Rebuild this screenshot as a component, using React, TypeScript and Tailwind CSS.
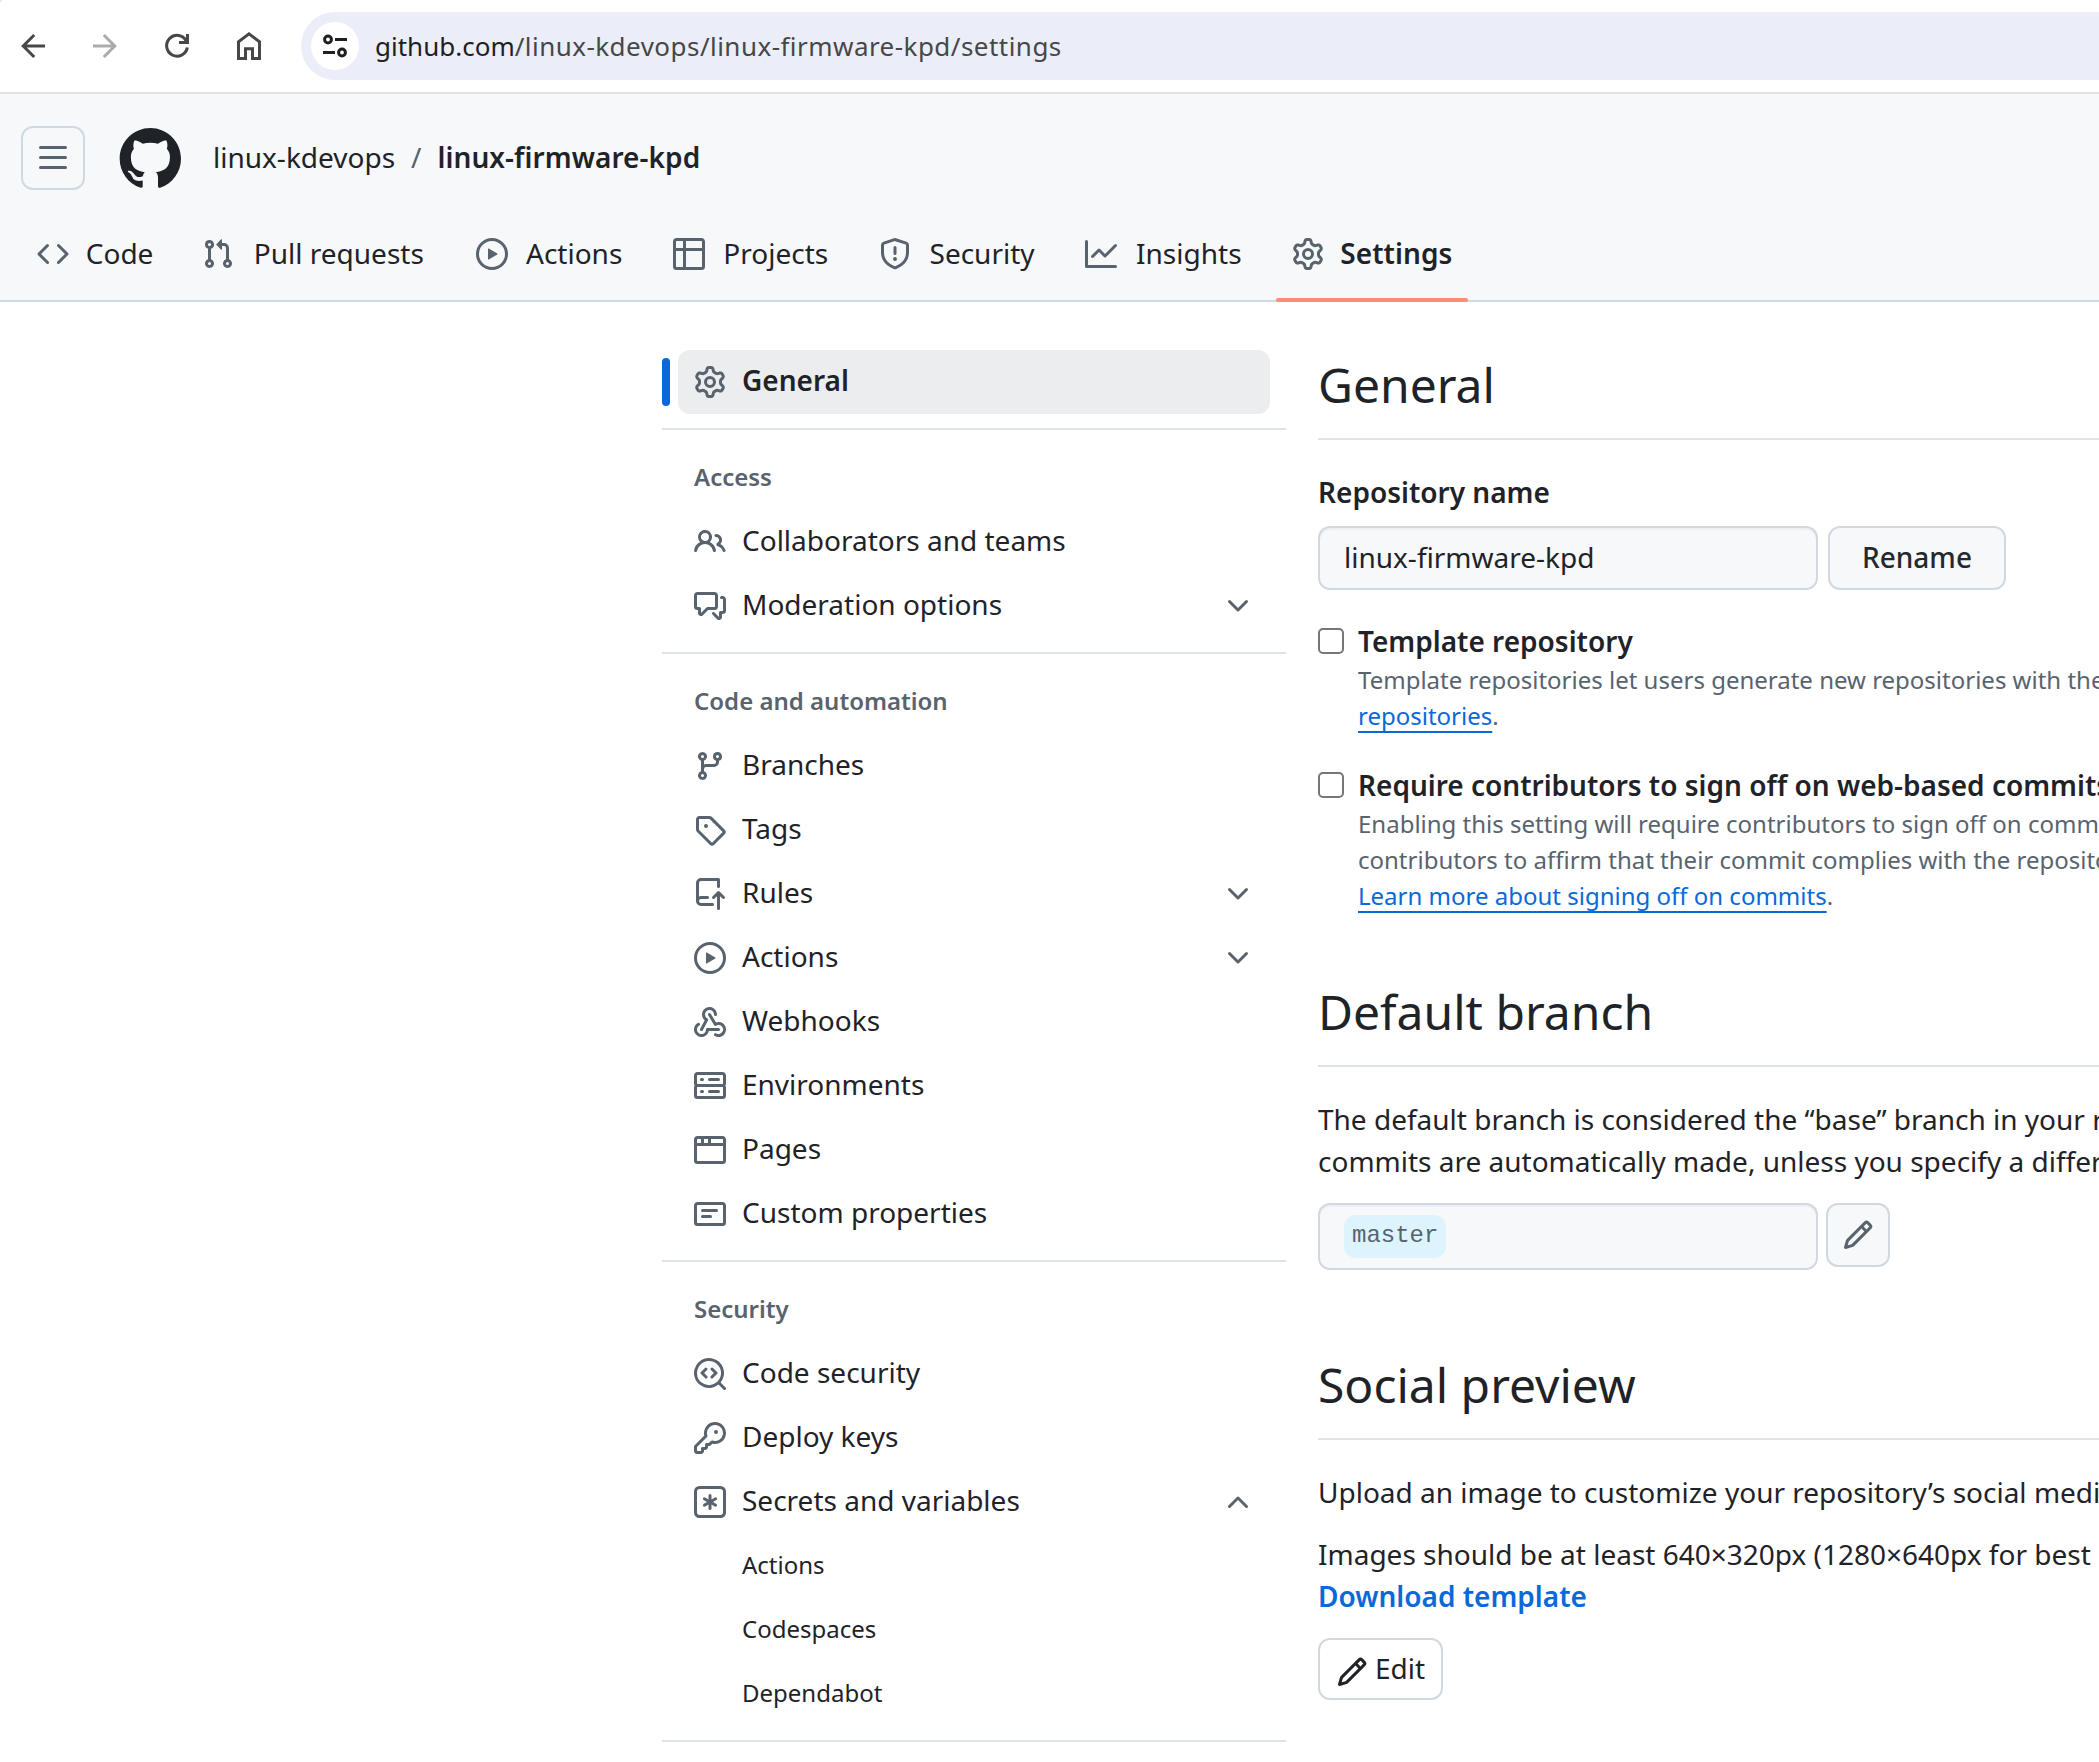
import type { ReactNode } from 'react';

const paths = {
  bars: 'M1 2.75A.75.75 0 0 1 1.75 2h12.5a.75.75 0 0 1 0 1.5H1.75A.75.75 0 0 1 1 2.75Zm0 5A.75.75 0 0 1 1.75 7h12.5a.75.75 0 0 1 0 1.5H1.75A.75.75 0 0 1 1 7.75ZM1.75 12h12.5a.75.75 0 0 1 0 1.5H1.75a.75.75 0 0 1 0-1.5Z',
  code: 'm11.28 3.22 4.25 4.25a.75.75 0 0 1 0 1.06l-4.25 4.25a.749.749 0 0 1-1.275-.326.749.749 0 0 1 .215-.734L13.94 8l-3.72-3.72a.749.749 0 0 1 .326-1.275.749.749 0 0 1 .734.215Zm-6.56 0a.751.751 0 0 1 1.042.018.751.751 0 0 1 .018 1.042L2.06 8l3.72 3.72a.749.749 0 0 1-.326 1.275.749.749 0 0 1-.734-.215L.47 8.53a.75.75 0 0 1 0-1.06Z',
  pull: 'M1.5 3.25a2.25 2.25 0 1 1 3 2.122v5.256a2.251 2.251 0 1 1-1.5 0V5.372A2.25 2.25 0 0 1 1.5 3.25Zm5.677-.177L9.573.677A.25.25 0 0 1 10 .854V2.5h1A2.5 2.5 0 0 1 13.5 5v5.628a2.251 2.251 0 1 1-1.5 0V5a1 1 0 0 0-1-1h-1v1.646a.25.25 0 0 1-.427.177L7.177 3.427a.25.25 0 0 1 0-.354ZM3.75 2.5a.75.75 0 1 0 0 1.5.75.75 0 0 0 0-1.5Zm0 9.5a.75.75 0 1 0 0 1.5.75.75 0 0 0 0-1.5Zm8.25.75a.75.75 0 1 0 1.5 0 .75.75 0 0 0-1.5 0Z',
  play: 'M8 0a8 8 0 1 1 0 16A8 8 0 0 1 8 0ZM1.5 8a6.5 6.5 0 1 0 13 0 6.5 6.5 0 0 0-13 0Zm4.879-2.773 4.264 2.559a.25.25 0 0 1 0 .428l-4.264 2.559A.25.25 0 0 1 6 10.559V5.442a.25.25 0 0 1 .379-.215Z',
  table: 'M0 1.75C0 .784.784 0 1.75 0h12.5C15.216 0 16 .784 16 1.75v12.5A1.75 1.75 0 0 1 14.25 16H1.75A1.75 1.75 0 0 1 0 14.25ZM6.5 6.5v8h7.75a.25.25 0 0 0 .25-.25V6.5Zm8-1.5V1.75a.25.25 0 0 0-.25-.25H6.5V5Zm-13 1.5v7.75c0 .138.112.25.25.25H5v-8ZM5 5V1.5H1.75a.25.25 0 0 0-.25.25V5Z',
  shield: 'M7.467.133a1.748 1.748 0 0 1 1.066 0l5.25 1.68A1.75 1.75 0 0 1 15 3.48V7c0 1.566-.32 3.182-1.303 4.682-.983 1.498-2.585 2.813-5.032 3.855a1.697 1.697 0 0 1-1.33 0c-2.447-1.042-4.049-2.357-5.032-3.855C1.32 10.182 1 8.566 1 7V3.48a1.75 1.75 0 0 1 1.217-1.667Zm.61 1.429a.25.25 0 0 0-.153 0l-5.25 1.68a.25.25 0 0 0-.174.238V7c0 1.358.275 2.666 1.057 3.86.784 1.194 2.121 2.34 4.366 3.297a.196.196 0 0 0 .154 0c2.245-.956 3.582-2.104 4.366-3.298C13.225 9.666 13.5 8.36 13.5 7V3.48a.251.251 0 0 0-.174-.237l-5.25-1.68ZM8.75 4.75v3a.75.75 0 0 1-1.5 0v-3a.75.75 0 0 1 1.5 0ZM9 10.5a1 1 0 1 1-2 0 1 1 0 0 1 2 0Z',
  graph: 'M1.5 1.75V13.5h13.75a.75.75 0 0 1 0 1.5H.75a.75.75 0 0 1-.75-.75V1.75a.75.75 0 0 1 1.5 0Zm14.28 2.53-5.25 5.25a.75.75 0 0 1-1.06 0L7 7.06 4.28 9.78a.751.751 0 0 1-1.042-.018.751.751 0 0 1-.018-1.042l3.25-3.25a.75.75 0 0 1 1.06 0L10 7.94l4.72-4.72a.751.751 0 0 1 1.042.018.751.751 0 0 1 .018 1.042Z',
  gear: 'M8 0a8.2 8.2 0 0 1 .701.031C9.444.095 9.99.645 10.16 1.29l.288 1.107c.018.066.079.158.212.224.231.114.454.243.668.386.123.082.233.09.299.071l1.103-.303c.644-.176 1.392.021 1.82.63.27.385.506.792.704 1.218.315.675.111 1.422-.364 1.891l-.814.806c-.049.048-.098.147-.088.294.016.257.016.515 0 .772-.01.147.038.246.088.294l.814.806c.475.469.679 1.216.364 1.891a7.977 7.977 0 0 1-.704 1.217c-.428.61-1.176.807-1.82.63l-1.102-.302c-.067-.019-.177-.011-.3.071a5.909 5.909 0 0 1-.668.386c-.133.066-.194.158-.211.224l-.29 1.106c-.168.646-.715 1.196-1.458 1.26a8.006 8.006 0 0 1-1.402 0c-.743-.064-1.289-.614-1.458-1.26l-.289-1.106c-.018-.066-.079-.158-.212-.224a5.738 5.738 0 0 1-.668-.386c-.123-.082-.233-.09-.299-.071l-1.103.303c-.644.176-1.392-.021-1.82-.63a8.12 8.12 0 0 1-.704-1.218c-.315-.675-.111-1.422.363-1.891l.815-.806c.05-.048.098-.147.088-.294a6.214 6.214 0 0 1 0-.772c.01-.147-.038-.246-.088-.294l-.815-.806C.635 6.045.431 5.298.746 4.623a7.92 7.92 0 0 1 .704-1.217c.428-.61 1.176-.807 1.82-.63l1.102.302c.067.019.177.011.3-.071.214-.143.437-.272.668-.386.133-.066.194-.158.211-.224l.29-1.106C6.009.645 6.556.095 7.299.03 7.53.01 7.764 0 8 0Zm-.571 1.525c-.036.003-.108.036-.137.146l-.289 1.105c-.147.561-.549.967-.998 1.189-.173.086-.34.183-.5.29-.417.278-.97.423-1.529.27l-1.103-.303c-.109-.03-.175.016-.195.045-.22.312-.412.644-.573.99-.014.031-.021.11.059.19l.815.806c.411.406.562.957.53 1.456a4.709 4.709 0 0 0 0 .582c.032.499-.119 1.05-.53 1.456l-.815.806c-.081.08-.073.159-.059.19.162.346.353.677.573.989.02.03.085.076.195.046l1.102-.303c.56-.153 1.113-.008 1.53.27.161.107.328.204.501.29.447.222.85.629.997 1.189l.289 1.105c.029.109.101.143.137.146a6.6 6.6 0 0 0 1.142 0c.036-.003.108-.036.137-.146l.289-1.105c.147-.561.549-.967.998-1.189.173-.086.34-.183.5-.29.417-.278.97-.423 1.529-.27l1.103.303c.109.029.175-.016.195-.045.22-.313.411-.644.573-.99.014-.031.021-.11-.059-.19l-.815-.806c-.411-.406-.562-.957-.53-1.456a4.709 4.709 0 0 0 0-.582c-.032-.499.119-1.05.53-1.456l.815-.806c.081-.08.073-.159.059-.19a6.464 6.464 0 0 0-.573-.989c-.02-.03-.085-.076-.195-.046l-1.102.303c-.56.153-1.113.008-1.53-.27a4.44 4.44 0 0 0-.501-.29c-.447-.222-.85-.629-.997-1.189l-.289-1.105c-.029-.11-.101-.143-.137-.146a6.6 6.6 0 0 0-1.142 0ZM11 8a3 3 0 1 1-6 0 3 3 0 0 1 6 0ZM9.5 8a1.5 1.5 0 1 0-3.001.001A1.5 1.5 0 0 0 9.5 8Z',
  people: 'M2 5.5a3.5 3.5 0 1 1 5.898 2.549 5.508 5.508 0 0 1 3.034 4.084.75.75 0 1 1-1.482.235 4 4 0 0 0-7.9 0 .75.75 0 0 1-1.482-.236A5.507 5.507 0 0 1 3.102 8.05 3.493 3.493 0 0 1 2 5.5ZM11 4a3.001 3.001 0 0 1 2.22 5.018 5.01 5.01 0 0 1 2.56 3.012.749.749 0 0 1-.885.954.752.752 0 0 1-.549-.514 3.507 3.507 0 0 0-2.522-2.372.75.75 0 0 1-.574-.73v-.352a.75.75 0 0 1 .416-.672A1.5 1.5 0 0 0 11 5.5.75.75 0 0 1 11 4Zm-5.5-.5a2 2 0 1 0-.001 3.999A2 2 0 0 0 5.5 3.5Z',
  discussion: 'M1.75 1h8.5c.966 0 1.75.784 1.75 1.75v5.5A1.75 1.75 0 0 1 10.25 10H7.061l-2.574 2.573A1.458 1.458 0 0 1 2 11.543V10h-.25A1.75 1.75 0 0 1 0 8.25v-5.5C0 1.784.784 1 1.75 1ZM1.5 2.75v5.5c0 .138.112.25.25.25h1a.75.75 0 0 1 .75.75v2.19l2.72-2.72a.749.749 0 0 1 .53-.22h3.5a.25.25 0 0 0 .25-.25v-5.5a.25.25 0 0 0-.25-.25h-8.5a.25.25 0 0 0-.25.25Zm13 2a.25.25 0 0 0-.25-.25h-.5a.75.75 0 0 1 0-1.5h.5c.966 0 1.75.784 1.75 1.75v5.5A1.75 1.75 0 0 1 14.25 12H14v1.543a1.458 1.458 0 0 1-2.487 1.03L9.22 12.28a.749.749 0 0 1 .326-1.275.749.749 0 0 1 .734.215l2.22 2.22v-2.19a.75.75 0 0 1 .75-.75h1a.25.25 0 0 0 .25-.25Z',
  branch: 'M9.5 3.25a2.25 2.25 0 1 1 3 2.122V6A2.5 2.5 0 0 1 10 8.5H6a1 1 0 0 0-1 1v1.128a2.251 2.251 0 1 1-1.5 0V5.372a2.25 2.25 0 1 1 1.5 0v1.836A2.493 2.493 0 0 1 6 7h4a1 1 0 0 0 1-1v-.628A2.25 2.25 0 0 1 9.5 3.25Zm-6 0a.75.75 0 1 0 1.5 0 .75.75 0 0 0-1.5 0Zm8.25-.75a.75.75 0 1 0 0 1.5.75.75 0 0 0 0-1.5ZM4.25 12a.75.75 0 1 0 0 1.5.75.75 0 0 0 0-1.5Z',
  tag: 'M1 7.775V2.75C1 1.784 1.784 1 2.75 1h5.025c.464 0 .91.184 1.238.513l6.25 6.25a1.75 1.75 0 0 1 0 2.474l-5.026 5.026a1.75 1.75 0 0 1-2.474 0l-6.25-6.25A1.752 1.752 0 0 1 1 7.775Zm1.5 0c0 .066.026.13.073.177l6.25 6.25a.25.25 0 0 0 .354 0l5.025-5.025a.25.25 0 0 0 0-.354l-6.25-6.25a.25.25 0 0 0-.177-.073H2.75a.25.25 0 0 0-.25.25ZM6 5a1 1 0 1 1 0 2 1 1 0 0 1 0-2Z',
  repoPush: 'M1 2.5A2.5 2.5 0 0 1 3.5 0h8.75a.75.75 0 0 1 .75.75v3.5a.75.75 0 0 1-1.5 0V1.5h-8a1 1 0 0 0-1 1v6.708A2.493 2.493 0 0 1 3.5 9h3.25a.75.75 0 0 1 0 1.5H3.5a1 1 0 0 0 0 2h5.75a.75.75 0 0 1 0 1.5H3.5A2.5 2.5 0 0 1 1 11.5Zm13.23 7.79a.75.75 0 0 0 1.06-1.06l-2.505-2.505a.75.75 0 0 0-1.06 0L9.22 9.229a.75.75 0 0 0 1.06 1.061l1.225-1.224v6.184a.75.75 0 0 0 1.5 0V9.066Z',
  webhook: 'M5.5 4.25a2.25 2.25 0 0 1 4.5 0 .75.75 0 0 0 1.5 0 3.75 3.75 0 1 0-6.14 2.889l-2.272 4.258a.75.75 0 0 0 1.324.706L7 7.25a.75.75 0 0 0-.309-1.015A2.25 2.25 0 0 1 5.5 4.25ZM7.364 3.607a.75.75 0 0 1 1.03.257l2.608 4.349a3.75 3.75 0 1 1-.628 6.785.75.75 0 0 1 .752-1.299 2.25 2.25 0 1 0-.033-3.88.75.75 0 0 1-1.03-.256L7.107 4.636a.75.75 0 0 1 .257-1.03ZM2.9 8.776A.75.75 0 0 1 2.625 9.8 2.25 2.25 0 1 0 6 11.75a.75.75 0 0 1 .75-.751h5.5a.75.75 0 0 1 0 1.5H7.425a3.751 3.751 0 1 1-5.55-3.998.75.75 0 0 1 1.024.274Z',
  server: 'M1.75 1h12.5c.966 0 1.75.784 1.75 1.75v4c0 .372-.116.717-.314 1 .198.283.314.628.314 1v4a1.75 1.75 0 0 1-1.75 1.75H1.75A1.75 1.75 0 0 1 0 12.75v-4c0-.358.109-.707.314-1a1.739 1.739 0 0 1-.314-1v-4C0 1.784.784 1 1.75 1ZM1.5 2.75v4c0 .138.112.25.25.25h12.5a.25.25 0 0 0 .25-.25v-4a.25.25 0 0 0-.25-.25H1.75a.25.25 0 0 0-.25.25Zm.25 5.75a.25.25 0 0 0-.25.25v4c0 .138.112.25.25.25h12.5a.25.25 0 0 0 .25-.25v-4a.25.25 0 0 0-.25-.25ZM7 4.75A.75.75 0 0 1 7.75 4h4.5a.75.75 0 0 1 0 1.5h-4.5A.75.75 0 0 1 7 4.75ZM7.75 10h4.5a.75.75 0 0 1 0 1.5h-4.5a.75.75 0 0 1 0-1.5ZM3 4.75A.75.75 0 0 1 3.75 4h.5a.75.75 0 0 1 0 1.5h-.5A.75.75 0 0 1 3 4.75ZM3.75 10h.5a.75.75 0 0 1 0 1.5h-.5a.75.75 0 0 1 0-1.5Z',
  browser: 'M0 2.75C0 1.784.784 1 1.75 1h12.5c.966 0 1.75.784 1.75 1.75v10.5A1.75 1.75 0 0 1 14.25 15H1.75A1.75 1.75 0 0 1 0 13.25ZM14.5 6h-13v7.25c0 .138.112.25.25.25h12.5a.25.25 0 0 0 .25-.25Zm-6-3.5v2h6V2.75a.25.25 0 0 0-.25-.25ZM5 2.5v2h2v-2Zm-3.25 0a.25.25 0 0 0-.25.25V4.5h2v-2Z',
  note: 'M0 3.75C0 2.784.784 2 1.75 2h12.5c.966 0 1.75.784 1.75 1.75v8.5A1.75 1.75 0 0 1 14.25 14H1.75A1.75 1.75 0 0 1 0 12.25Zm1.75-.25a.25.25 0 0 0-.25.25v8.5c0 .138.112.25.25.25h12.5a.25.25 0 0 0 .25-.25v-8.5a.25.25 0 0 0-.25-.25ZM3.5 6.25a.75.75 0 0 1 .75-.75h7a.75.75 0 0 1 0 1.5h-7a.75.75 0 0 1-.75-.75Zm.75 2.25h4a.75.75 0 0 1 0 1.5h-4a.75.75 0 0 1 0-1.5Z',
  codescan: 'M8.47 4.97a.75.75 0 0 0 0 1.06L9.94 7.5 8.47 8.97a.75.75 0 1 0 1.06 1.06l2-2a.75.75 0 0 0 0-1.06l-2-2a.75.75 0 0 0-1.06 0ZM6.53 6.03a.75.75 0 0 0-1.06-1.06l-2 2a.75.75 0 0 0 0 1.06l2 2a.75.75 0 1 0 1.06-1.06L5.06 7.5l1.47-1.47ZM12.246 13.307a7.501 7.501 0 1 1 1.06-1.06l2.474 2.473a.749.749 0 0 1-.326 1.275.749.749 0 0 1-.734-.215ZM1.5 7.5a6.002 6.002 0 0 0 3.608 5.504 6.002 6.002 0 0 0 6.486-1.117.748.748 0 0 1 .292-.293A6 6 0 1 0 1.5 7.5Z',
  key: 'M10.5 0a5.499 5.499 0 1 1-1.288 10.848l-.932.932a.749.749 0 0 1-.53.22H7v.75a.749.749 0 0 1-.22.53l-.5.5a.749.749 0 0 1-.53.22H5v.75a.749.749 0 0 1-.22.53l-.5.5a.749.749 0 0 1-.53.22h-2A1.75 1.75 0 0 1 0 14.25v-2c0-.199.079-.389.22-.53l4.932-4.932A5.5 5.5 0 0 1 10.5 0Zm-4 5.5c-.001.431.069.86.205 1.269a.75.75 0 0 1-.181.768L1.5 12.56v1.69c0 .138.112.25.25.25h1.69l.06-.06v-1.19a.75.75 0 0 1 .75-.75h1.19l.06-.06v-1.19a.75.75 0 0 1 .75-.75h1.19l1.023-1.025a.75.75 0 0 1 .768-.18A4 4 0 1 0 6.5 5.5ZM11 6a1 1 0 1 1 0-2 1 1 0 0 1 0 2Z',
  asterisk: 'M0 2.75A2.75 2.75 0 0 1 2.75 0h10.5A2.75 2.75 0 0 1 16 2.75v10.5A2.75 2.75 0 0 1 13.25 16H2.75A2.75 2.75 0 0 1 0 13.25ZM2.75 1.5c-.69 0-1.25.56-1.25 1.25v10.5c0 .69.56 1.25 1.25 1.25h10.5c.69 0 1.25-.56 1.25-1.25V2.75c0-.69-.56-1.25-1.25-1.25ZM8 4a.75.75 0 0 1 .75.75V6.7l1.69-.975a.75.75 0 0 1 .75 1.3L9.5 8l1.69.976a.75.75 0 0 1-.75 1.298L8.75 9.3v1.951a.75.75 0 0 1-1.5 0V9.299l-1.69.976a.75.75 0 0 1-.75-1.3L6.5 8l-1.69-.975a.75.75 0 0 1 .75-1.3l1.69.976V4.75A.75.75 0 0 1 8 4Z',
  chevron: 'M12.78 5.22a.749.749 0 0 1 0 1.06l-4.25 4.25a.749.749 0 0 1-1.06 0L3.22 6.28a.749.749 0 1 1 1.06-1.06L8 8.939l3.72-3.719a.749.749 0 0 1 1.06 0Z',
  pencil: 'M11.013 1.427a1.75 1.75 0 0 1 2.474 0l1.086 1.086a1.75 1.75 0 0 1 0 2.474l-8.61 8.61c-.21.21-.47.364-.756.445l-3.251.93a.75.75 0 0 1-.927-.928l.929-3.25c.081-.286.235-.547.445-.758l8.61-8.61Zm.176 4.823L9.75 4.81l-6.286 6.287a.253.253 0 0 0-.064.108l-.558 1.953 1.953-.558a.253.253 0 0 0 .108-.064Zm1.238-3.763a.25.25 0 0 0-.354 0L10.811 3.75l1.439 1.44 1.263-1.263a.25.25 0 0 0 0-.354Z',
};

type IconName = keyof typeof paths;

function Icon({ name, className = 'text-[#59636e]' }: { name: IconName; className?: string }) {
  return (
    <svg viewBox="0 0 16 16" fill="currentColor" className={`size-8 shrink-0 ${className}`}>
      <path fillRule={name === 'asterisk' ? 'evenodd' : 'nonzero'} d={paths[name]} />
    </svg>
  );
}

function Toolbar() {
  return (
    <div className="bg-[#d3e3fd]">
      <div className="flex h-[94px] items-center rounded-tl-[4px] border-b-2 border-[#dfe3e4] bg-white pl-[15px]">
        <div className="flex gap-9">
          <svg viewBox="0 0 36 36" className="size-9" fill="none" stroke="#474747" strokeWidth="3">
            <path d="M30 18H8M19.2 7 8.2 18l11 11" />
          </svg>
          <svg viewBox="0 0 36 36" className="size-9" fill="none" stroke="#ababab" strokeWidth="3">
            <path d="M6 18h22M16.8 7l11 11-11 11" />
          </svg>
          <svg viewBox="0 0 36 36" className="size-9" fill="none" stroke="#474747" strokeWidth="3">
            <path d="M28.3 19.5A10.4 10.4 0 1 1 27.3 13M28.5 6v8.6H20" />
          </svg>
          <svg viewBox="0 0 36 36" className="size-9" fill="none" stroke="#474747" strokeWidth="3">
            <path d="M7.5 30.5V13.7L18 5.8l10.5 7.9v16.8h-7v-9.8h-7v9.8Z" />
          </svg>
        </div>
        <div className="ml-[34px] flex h-[68px] flex-1 items-center rounded-l-full bg-[#ebeef8] pl-2.5">
          <div className="flex size-12 items-center justify-center rounded-full bg-white">
            <svg viewBox="0 0 24 24" className="size-6" fill="none" stroke="#1f1f1f" strokeWidth="3">
              <circle cx="5" cy="5.5" r="3.4" />
              <circle cx="19" cy="18.5" r="3.4" />
              <path d="M12 5.5h12M0 18.5h12" />
            </svg>
          </div>
          <div className="ml-4 text-[26px] leading-[40px] whitespace-nowrap text-[#474747]">
            <span className="text-[#1f1f1f]">github.com</span>
            <span className="tracking-[0.46px]">/linux-kdevops/linux-firmware-kpd/settings</span>
          </div>
        </div>
      </div>
    </div>
  );
}

const tabs: { icon: IconName; label: string; current?: boolean }[] = [
  { icon: 'code', label: 'Code' },
  { icon: 'pull', label: 'Pull requests' },
  { icon: 'play', label: 'Actions' },
  { icon: 'table', label: 'Projects' },
  { icon: 'shield', label: 'Security' },
  { icon: 'graph', label: 'Insights' },
  { icon: 'gear', label: 'Settings', current: true },
];

function Header() {
  return (
    <header className="h-52 border-b-2 border-[#d1d9e0] bg-[#f6f8fa] pt-8 pl-[21px]">
      <div className="flex h-16 items-center">
        <button className="flex size-16 items-center justify-center rounded-xl border-2 border-[#d1d9e0]">
          <Icon name="bars" />
        </button>
        <svg viewBox="0 0 24 24" fill="#1f2328" className="ml-8 size-16">
          <path d="M12.5.75C6.146.75 1 5.896 1 12.25c0 5.089 3.292 9.387 7.863 10.91.575.101.79-.244.79-.546 0-.273-.014-1.178-.014-2.142-2.889.532-3.636-.704-3.866-1.35-.13-.331-.69-1.352-1.18-1.625-.402-.216-.977-.748-.014-.762.906-.014 1.553.834 1.769 1.179 1.035 1.74 2.688 1.25 3.349.948.1-.747.402-1.25.733-1.538-2.559-.287-5.232-1.279-5.232-5.678 0-1.25.445-2.285 1.178-3.09-.115-.288-.517-1.467.115-3.048 0 0 .963-.302 3.163 1.179.92-.259 1.897-.388 2.875-.388.977 0 1.955.13 2.875.388 2.2-1.495 3.162-1.179 3.162-1.179.633 1.581.23 2.76.115 3.048.733.805 1.179 1.825 1.179 3.09 0 4.413-2.688 5.39-5.247 5.678.417.36.776 1.05.776 2.128 0 1.538-.014 2.774-.014 3.162 0 .302.216.662.79.547C20.709 21.637 24 17.324 24 12.25 24 5.896 18.854.75 12.5.75Z" />
        </svg>
        <div className="ml-8 flex pb-[3px] leading-[42px] whitespace-nowrap">
          <span>linux-kdevops</span>
          <span className="mx-4 text-[#59636e]">/</span>
          <span className="font-semibold tracking-[0.06px]">linux-firmware-kpd</span>
        </div>
      </div>
      <nav className="mt-4 flex gap-4">
        {tabs.map((t) => (
          <a key={t.label} className="relative flex h-24 items-center gap-4 px-4">
            <Icon name={t.icon} />
            <span
              data-content={t.label}
              className={`pb-0.5 text-center leading-[42px] before:invisible before:block before:h-0 before:font-semibold before:tracking-[0.03px] before:content-[attr(data-content)] ${t.current ? 'font-semibold tracking-[0.08px]' : ''}`}
            >
              {t.label}
            </span>
            {t.current && <span className="absolute inset-x-0 bottom-0 h-1 rounded-full bg-[#fd8c73]" />}
          </a>
        ))}
      </nav>
    </header>
  );
}

function NavItem({ icon, label, chevron, current }: { icon: IconName; label: string; chevron?: 'down' | 'up'; current?: boolean }) {
  return (
    <div className="flex h-16">
      {current && <span className="my-2 w-2 rounded-full bg-[#0969da]" />}
      <a className={`flex flex-1 items-center gap-4 rounded-xl px-4 ${current ? 'mr-4 ml-2 bg-[#ecedef] font-semibold' : 'mx-4'}`}>
        <Icon name={icon} />
        <span className="flex-1 pb-1 leading-10">{label}</span>
        {chevron && <Icon name="chevron" className={chevron === 'up' ? 'rotate-180 text-[#59636e]' : 'text-[#59636e]'} />}
      </a>
    </div>
  );
}

function Group({ title, children }: { title: string; children: ReactNode }) {
  return (
    <section className="border-b-2 border-[#dfe4e9] pb-3.5">
      <h3 className="flex h-20 items-center pt-3.5 pl-8 text-2xl leading-9 font-semibold text-[#59636e]">{title}</h3>
      {children}
    </section>
  );
}

function Sidebar() {
  return (
    <aside className="w-[624px] shrink-0">
      <div className="border-b-2 border-[#dfe4e9] pb-3.5">
        <NavItem icon="gear" label="General" current />
      </div>
      <Group title="Access">
        <NavItem icon="people" label="Collaborators and teams" />
        <NavItem icon="discussion" label="Moderation options" chevron="down" />
      </Group>
      <Group title="Code and automation">
        <NavItem icon="branch" label="Branches" />
        <NavItem icon="tag" label="Tags" />
        <NavItem icon="repoPush" label="Rules" chevron="down" />
        <NavItem icon="play" label="Actions" chevron="down" />
        <NavItem icon="webhook" label="Webhooks" />
        <NavItem icon="server" label="Environments" />
        <NavItem icon="browser" label="Pages" />
        <NavItem icon="note" label="Custom properties" />
      </Group>
      <Group title="Security">
        <NavItem icon="codescan" label="Code security" />
        <NavItem icon="key" label="Deploy keys" />
        <NavItem icon="asterisk" label="Secrets and variables" chevron="up" />
        {['Actions', 'Codespaces', 'Dependabot'].map((s) => (
          <a key={s} className="flex h-16 items-center pb-0.5 pl-20 text-2xl leading-9">
            {s}
          </a>
        ))}
      </Group>
    </aside>
  );
}

function Heading({ children }: { children: ReactNode }) {
  return <h2 className="h-[90px] border-b-2 border-[#dfe4e9] text-5xl leading-[70px] font-normal">{children}</h2>;
}

function Option({ title, children }: { title: string; children: ReactNode }) {
  return (
    <div className="flex gap-3.5">
      <span className="mt-2 size-[26px] shrink-0 rounded-[5px] border-2 border-[#767676] bg-white" />
      <div>
        <div className="leading-[42px] font-semibold">{title}</div>
        <div className="text-2xl leading-9 text-[#59636e]">{children}</div>
      </div>
    </div>
  );
}

function TextLink({ children }: { children: ReactNode }) {
  return <a className="text-[#0969da] underline decoration-2 underline-offset-[6px] [text-decoration-skip-ink:none]">{children}</a>;
}

function Main() {
  return (
    <main className="w-[1400px] shrink-0 whitespace-nowrap">
      <Heading>General</Heading>
      <div className="mt-[31px] leading-[42px] font-semibold">Repository name</div>
      <div className="mt-[13px] flex gap-2.5">
        <div className="flex h-16 w-[500px] items-center rounded-xl border-2 border-[#d1d9e0] bg-[#f6f8fa] px-6 pb-0.5 shadow-[inset_0_2px_0_rgba(31,35,40,0.04)]">
          linux-firmware-kpd
        </div>
        <button className="flex h-16 w-[178px] items-center justify-center rounded-xl border-2 border-[#d1d9e0] bg-[#f6f8fa] pb-0.5 font-medium text-[#25292e]">
          Rename
        </button>
      </div>
      <div className="mt-[30px] flex flex-col gap-[30px]">
        <Option title="Template repository">
          Template repositories let users generate new repositories with the same directory structure and files.
          <br />
          <TextLink>repositories</TextLink>.
        </Option>
        <Option title="Require contributors to sign off on web-based commits">
          Enabling this setting will require contributors to sign off on commits made through the web interface.
          <br />
          contributors to affirm that their commit complies with the repository's terms.
          <br />
          <TextLink>Learn more about signing off on commits</TextLink>.
        </Option>
      </div>

      <div className="mt-[63px]">
        <Heading>Default branch</Heading>
      </div>
      <p className="mt-[31px] leading-[42px]">
        The default branch is considered the “base” branch in your repository, against which all pull requests and code
        <br />
        commits are automatically made, unless you specify a different branch.
      </p>
      <div className="mt-[21px] flex gap-2">
        <div className="h-[67px] w-[500px] rounded-xl border-2 border-[#d1d9e0] bg-[#f6f8fa] px-6 pt-2.5 shadow-[inset_0_2px_0_rgba(31,35,40,0.04)]">
          <span className="inline-block h-[43px] rounded-xl bg-[#ddf4ff] px-2 align-top font-['Liberation_Mono',monospace] text-2xl leading-[41px] text-[#59636e]">
            master
          </span>
        </div>
        <button className="flex size-16 items-center justify-center rounded-xl border-2 border-[#d1d9e0] bg-[#f6f8fa]">
          <Icon name="pencil" />
        </button>
      </div>

      <div className="mt-20">
        <Heading>Social preview</Heading>
      </div>
      <p className="mt-[31px] leading-[42px]">Upload an image to customize your repository’s social media preview.</p>
      <p className="mt-5 leading-[42px]">
        Images should be at least 640×320px (1280×640px for best display).
        <br />
        <a className="font-semibold text-[#0969da]">Download template</a>
      </p>
      <button className="mt-[21px] flex h-[62px] w-[125px] items-center gap-[7px] rounded-xl border-2 border-[#d1d9e0] bg-white pl-4">
        <Icon name="pencil" className="mt-1.5 text-[#1f2328]" />
        <span className="pb-0.5">Edit</span>
      </button>
    </main>
  );
}

export default function App() {
  return (
    <div className="h-[1762px] w-[2099px] overflow-hidden bg-white font-['Noto_Sans',sans-serif] text-[28px] leading-[42px] text-[#1f2328]">
      <Toolbar />
      <Header />
      <div className="flex gap-8 pt-12 pl-[662px]">
        <Sidebar />
        <Main />
      </div>
    </div>
  );
}
